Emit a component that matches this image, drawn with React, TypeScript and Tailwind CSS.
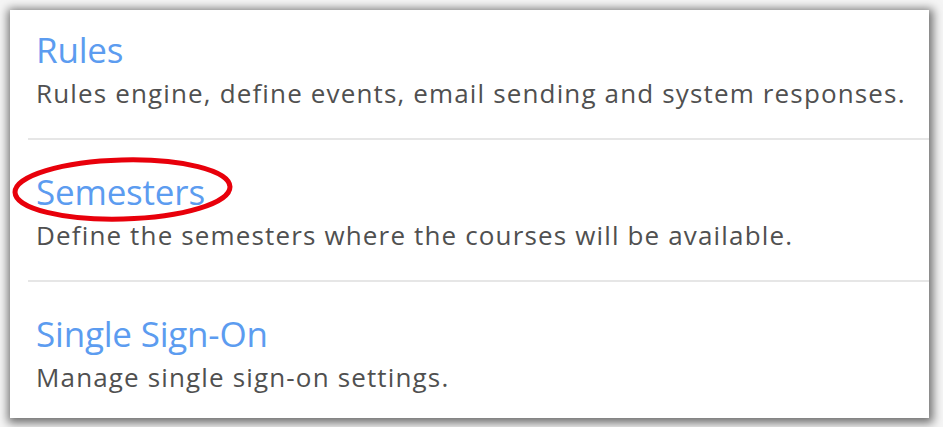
import React from 'react';

interface SettingItem {
  title: string;
  description: string;
}

const items: SettingItem[] = [
  { title: 'Rules', description: 'Rules engine, define events, email sending and system responses.' },
  { title: 'Semesters', description: 'Define the semesters where the courses will be available.' },
  { title: 'Single Sign-On', description: 'Manage single sign-on settings.' },
];

function SettingRow({ item, first, last }: { item: SettingItem; first: boolean; last: boolean }) {
  return (
    <div
      className={`pl-[8px] pb-[29px] ${first ? 'pt-[20px]' : 'pt-[32px]'} ${
        last ? '' : 'border-b-2 border-[#e6e6e6]'
      }`}
    >
      <a href="#" className="block text-[35px] leading-[40px] text-[#5c9cf0] tracking-[-0.2px]">
        {item.title}
      </a>
      <p className="mt-[7px] text-[26px] leading-[32px] tracking-[1.15px] text-[#505050]">
        {item.description}
      </p>
    </div>
  );
}

export default function App() {
  return (
    <div className="w-[943px] h-[427px] bg-[#f5f5f5] pt-[10px] pl-[10px] font-['Open_Sans',sans-serif]">
      <div className="relative w-[919px] h-[408px] bg-white shadow-[1px_2px_9px_3px_rgba(0,0,0,0.55)]">
        <div className="ml-[18px]">
          {items.map((item, i) => (
            <SettingRow key={item.title} item={item} first={i === 0} last={i === items.length - 1} />
          ))}
        </div>
        {/* red annotation ring around Semesters */}
        <svg className="absolute left-[2px] top-[147px]" width="221" height="65" viewBox="0 0 221 65">
          <ellipse
            cx="110.5"
            cy="32.5"
            rx="107.5"
            ry="29.5"
            fill="none"
            stroke="#e8000b"
            strokeWidth="5"
            transform="rotate(-1.5 110.5 32.5)"
          />
        </svg>
      </div>
    </div>
  );
}
